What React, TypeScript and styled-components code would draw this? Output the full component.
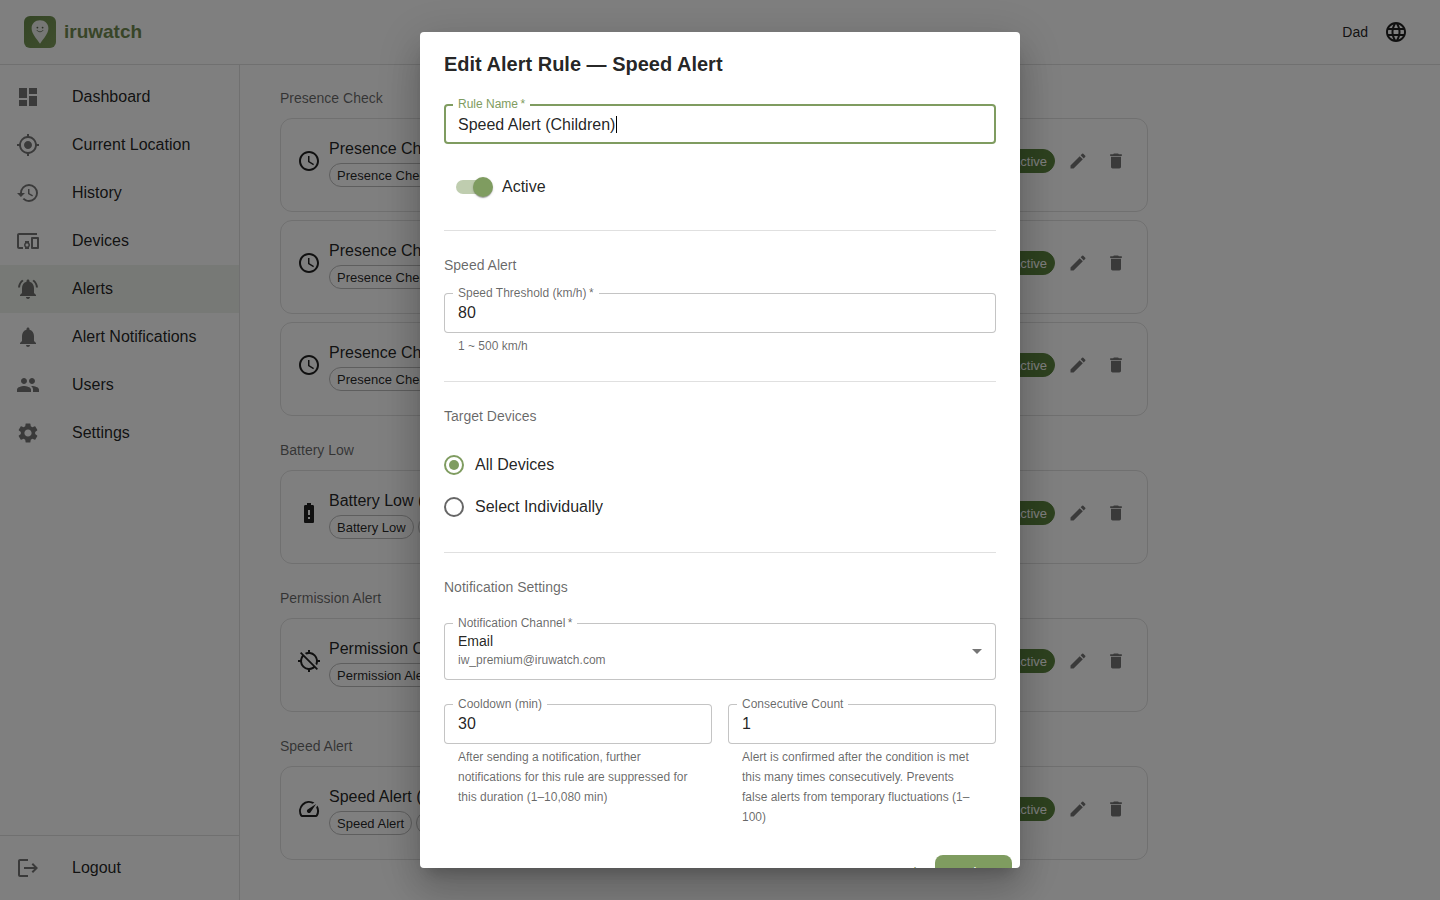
import React, { useEffect, useId, useRef, useState } from "react";
import styled, { createGlobalStyle, css } from "styled-components";
import type { IconType } from "react-icons";
import {
  MdAccessTime,
  MdArrowDropDown,
  MdBatteryAlert,
  MdDashboard,
  MdDelete,
  MdDevicesOther,
  MdEdit,
  MdHistory,
  MdLanguage,
  MdLocationDisabled,
  MdLogout,
  MdMyLocation,
  MdNotifications,
  MdNotificationsActive,
  MdPeople,
  MdSettings,
  MdSpeed,
} from "react-icons/md";

const color = {
  primary: "#7f9c60",
  brand: "#708a50",
  track: "#bfcdaf",
  active: "#5b843e",
  text: "rgba(0, 0, 0, 0.87)",
  muted: "rgba(0, 0, 0, 0.6)",
  icon: "rgba(0, 0, 0, 0.54)",
  divider: "rgba(0, 0, 0, 0.12)",
  outline: "#c4c4c4",
  selected: "rgba(120, 145, 95, 0.12)",
};

const fontFamily = '"Liberation Sans", Arial, sans-serif';

const GlobalStyle = createGlobalStyle`
  *, *::before, *::after { box-sizing: border-box; }
  body {
    margin: 0;
    background: #fff;
    color: ${color.text};
    font-family: ${fontFamily};
    font-size: 16px;
    line-height: 24px;
  }
  button, input, select { font: inherit; color: inherit; }
  button { cursor: pointer; }
`;

/* ---------- Page frame ---------- */

const Shell = styled.div`
  display: flex;
  flex-direction: column;
  height: 100vh;
`;

const Header = styled.header`
  display: flex;
  align-items: center;
  justify-content: space-between;
  height: 65px;
  flex-shrink: 0;
  padding: 0 24px;
  border-bottom: 1px solid ${color.divider};
`;

const Brand = styled.a`
  display: flex;
  align-items: center;
  gap: 8px;
  color: ${color.brand};
  font-size: 19px;
  font-weight: 700;
  text-decoration: none;
`;

const Account = styled.div`
  display: flex;
  align-items: center;
  gap: 8px;
  font-size: 14px;
`;

const IconButton = styled.button<{ $size: number; $strong?: boolean }>`
  display: flex;
  align-items: center;
  justify-content: center;
  width: ${(p) => p.$size}px;
  height: ${(p) => p.$size}px;
  padding: 0;
  border: 0;
  border-radius: 50%;
  background: none;
  color: ${(p) => (p.$strong ? color.text : color.icon)};
`;

const Body = styled.div`
  display: flex;
  flex: 1;
  min-height: 0;
`;

const Sidebar = styled.aside`
  display: flex;
  flex-direction: column;
  justify-content: space-between;
  width: 240px;
  flex-shrink: 0;
  border-right: 1px solid ${color.divider};
`;

const NavList = styled.nav`
  padding: 8px 0;
`;

const SidebarFooter = styled.div`
  padding: 8px 0;
  border-top: 1px solid ${color.divider};
`;

const navEntry = css`
  display: flex;
  align-items: center;
  gap: 32px;
  width: 100%;
  height: 48px;
  padding: 0 16px;
  color: ${color.text};
  svg {
    color: ${color.icon};
  }
`;

const NavLink = styled.a<{ $selected?: boolean }>`
  ${navEntry}
  text-decoration: none;
  background: ${(p) => (p.$selected ? color.selected : "transparent")};
`;

const NavButton = styled.button`
  ${navEntry}
  border: 0;
  background: none;
`;

/* ---------- Rule list ---------- */

const Main = styled.main`
  flex: 1;
  min-width: 0;
  overflow-y: auto;
  padding: 23px 40px;
`;

const Groups = styled.div`
  display: flex;
  flex-direction: column;
  gap: 24px;
  max-width: 868px;
`;

const Group = styled.section`
  display: flex;
  flex-direction: column;
  gap: 8px;
`;

const Subheading = styled.h3`
  margin: 0;
  padding-bottom: 2px;
  color: ${color.muted};
  font-size: 14px;
  font-weight: 400;
  line-height: 20px;
`;

const Card = styled.article`
  display: flex;
  align-items: center;
  gap: 8px;
  padding: 16px 16px 24px;
  border: 1px solid ${color.divider};
  border-radius: 12px;
`;

const CardBody = styled.div`
  flex: 1;
  min-width: 0;
`;

const CardTitle = styled.div`
  line-height: 28px;
`;

const Chips = styled.div`
  display: flex;
  gap: 4px;
`;

const Chip = styled.span<{ $filled?: boolean }>`
  display: inline-flex;
  align-items: center;
  height: 24px;
  padding: 2px 7px 0;
  border: 1px solid ${(p) => (p.$filled ? color.active : "#bdbdbd")};
  border-radius: 12px;
  background: ${(p) => (p.$filled ? color.active : "transparent")};
  color: ${(p) => (p.$filled ? "#fff" : color.text)};
  font-size: 13px;
  line-height: 20px;
  white-space: nowrap;
`;

/* ---------- Dialog ---------- */

const Backdrop = styled.div`
  position: fixed;
  inset: 0;
  display: flex;
  align-items: center;
  justify-content: center;
  padding: 32px;
  background: rgba(0, 0, 0, 0.5);
`;

const Paper = styled.form`
  width: 100%;
  max-width: 600px;
  max-height: 100%;
  overflow-y: auto;
  scrollbar-width: none;
  border-radius: 4px;
  background: #fff;
  box-shadow:
    0 11px 15px -7px rgba(0, 0, 0, 0.2),
    0 24px 38px 3px rgba(0, 0, 0, 0.14),
    0 9px 46px 8px rgba(0, 0, 0, 0.12);
`;

const DialogTitle = styled.h2`
  margin: 0;
  padding: 16px 24px;
  font-size: 20px;
  font-weight: 700;
  line-height: 32px;
`;

const DialogContent = styled.div`
  display: flex;
  flex-direction: column;
  gap: 24px;
  padding: 8px 24px 19px;
`;

const Divider = styled.hr`
  width: 100%;
  height: 1px;
  margin: 0;
  border: 0;
  background: ${color.divider};
`;

const FormSection = styled.section`
  display: flex;
  flex-direction: column;
  gap: 16px;
`;

const FieldRow = styled.div`
  display: grid;
  grid-template-columns: 1fr 1fr;
  gap: 16px;
`;

const FieldBox = styled.div`
  position: relative;
  border-radius: 4px;
  box-shadow: inset 0 0 0 1px ${color.outline};
  &:focus-within {
    box-shadow: inset 0 0 0 2px ${color.primary};
  }
  &:focus-within > label {
    color: ${color.primary};
  }
`;

const FloatingLabel = styled.label`
  position: absolute;
  top: -9px;
  left: 9px;
  padding: 0 5px;
  background: #fff;
  color: ${color.muted};
  font-size: 12px;
  line-height: 18px;
  pointer-events: none;
`;

const TextInput = styled.input`
  display: block;
  width: 100%;
  height: 40px;
  padding: 0 14px;
  border: 0;
  outline: 0;
  background: none;
  appearance: textfield;
  &[type="text"] {
    padding-top: 2px;
    caret-color: transparent;
  }
  &::-webkit-inner-spin-button {
    display: none;
  }
`;

const Caret = styled.span`
  position: absolute;
  top: 12px;
  width: 1px;
  height: 17px;
  background: #000;
`;

const HelperText = styled.p`
  margin: 3px 14px 0;
  padding-bottom: 1px;
  color: ${color.muted};
  font-size: 12px;
  line-height: 20px;
`;

const SelectValue = styled.div`
  display: flex;
  align-items: center;
  justify-content: space-between;
  padding: 8px 7px 9px 14px;
  svg {
    color: ${color.icon};
  }
`;

const SelectText = styled.div`
  display: flex;
  flex-direction: column;
  padding-bottom: 2px;
  font-size: 14px;
  line-height: 20px;
`;

const SelectDetail = styled.span`
  color: ${color.muted};
  font-size: 12px;
  line-height: 18px;
`;

const NativeSelect = styled.select`
  position: absolute;
  inset: 0;
  width: 100%;
  opacity: 0;
`;

const SwitchLabel = styled.label`
  display: flex;
  align-items: center;
`;

const SwitchInput = styled.input`
  position: relative;
  appearance: none;
  width: 34px;
  height: 14px;
  margin: 12px;
  border-radius: 7px;
  background: #9e9e9e;
  &::before {
    content: "";
    position: absolute;
    top: -3px;
    left: -3px;
    width: 20px;
    height: 20px;
    border-radius: 50%;
    background: #fff;
    box-shadow:
      0 2px 1px -1px rgba(0, 0, 0, 0.2),
      0 1px 1px rgba(0, 0, 0, 0.14),
      0 1px 3px rgba(0, 0, 0, 0.12);
  }
  &:checked {
    background: ${color.track};
  }
  &:checked::before {
    left: 17px;
    background: ${color.primary};
  }
`;

const RadioLabel = styled.label`
  display: flex;
  align-items: center;
  gap: 11px;
  height: 42px;
`;

const RadioInput = styled.input`
  display: grid;
  place-items: center;
  appearance: none;
  width: 20px;
  height: 20px;
  margin: 0;
  border: 2px solid ${color.muted};
  border-radius: 50%;
  &:checked {
    border-color: ${color.primary};
  }
  &:checked::before {
    content: "";
    width: 10px;
    height: 10px;
    border-radius: 50%;
    background: ${color.primary};
  }
`;

const DialogActions = styled.div`
  display: flex;
  justify-content: flex-end;
  gap: 8px;
  padding: 8px;
`;

const ActionButton = styled.button<{ $contained?: boolean }>`
  min-width: 64px;
  padding: ${(p) => (p.$contained ? "6px 16px" : "6px 8px")};
  border: 0;
  border-radius: 8px;
  background: ${(p) => (p.$contained ? color.primary : "none")};
  color: ${(p) => (p.$contained ? "#fff" : color.primary)};
  font-size: 14px;
  line-height: 24px;
`;

/* ---------- Pieces ---------- */

function Logo() {
  return (
    <svg width="32" height="32" viewBox="0 0 32 32" aria-hidden="true">
      <defs>
        <linearGradient id="logo-bg" x1="0" y1="0" x2="1" y2="1">
          <stop offset="0" stopColor="#688a4a" />
          <stop offset="1" stopColor="#7f9c5c" />
        </linearGradient>
      </defs>
      <rect width="32" height="32" rx="6" fill="url(#logo-bg)" />
      <path
        d="M16 4.2c-4.8 0-8.400 3.500-8.400 8 0 5.300 4.800 10.200 8.400 15.500 3.600-5.300 8.400-10.200 8.400-15.500 0-4.500-3.600-8-8.400-8z"
        fill="#eceeea"
      />
      <circle cx="13.400" cy="11.600" r="0.900" fill="#55604a" />
      <circle cx="18.600" cy="11.600" r="0.900" fill="#55604a" />
      <path d="M13 14.400c1.400 1.900 4.600 1.900 6 0" fill="none" stroke="#55604a" strokeWidth="0.800" strokeLinecap="round" />
    </svg>
  );
}

function textWidth(text: string) {
  const context = document.createElement("canvas").getContext("2d");
  if (!context) return 0;
  context.font = `16px ${fontFamily}`;
  return Math.round(context.measureText(text).width);
}

type FieldProps = {
  label: string;
  required?: boolean;
  value: string;
  type?: string;
  helper?: string;
  focusOnOpen?: boolean;
};

function Field({ label, required, value, type = "text", helper, focusOnOpen }: FieldProps) {
  const id = useId();
  const ref = useRef<HTMLInputElement>(null);
  const [current, setCurrent] = useState(value);
  const [caret, setCaret] = useState<number | null>(null);

  const updateCaret = () => {
    const input = ref.current;
    if (!input || input.type !== "text") return;
    setCaret(textWidth(input.value.slice(0, input.selectionEnd ?? input.value.length)));
  };

  useEffect(() => {
    if (focusOnOpen && ref.current) {
      ref.current.focus();
      ref.current.setSelectionRange(value.length, value.length);
      updateCaret();
    }
  }, [focusOnOpen, value]);

  return (
    <div>
      <FieldBox>
        <TextInput
          id={id}
          ref={ref}
          type={type}
          required={required}
          value={current}
          aria-describedby={helper ? `${id}-help` : undefined}
          onChange={(e) => setCurrent(e.target.value)}
          onSelect={updateCaret}
          onBlur={() => setCaret(null)}
        />
        {caret !== null && <Caret style={{ left: 14 + caret }} />}
        <FloatingLabel htmlFor={id}>
          {label}
          {required && "\u2009*"}
        </FloatingLabel>
      </FieldBox>
      {helper && <HelperText id={`${id}-help`}>{helper}</HelperText>}
    </div>
  );
}

function ChannelSelect() {
  return (
    <FieldBox>
      <SelectValue aria-hidden="true">
        <SelectText>
          <span>Email</span>
          <SelectDetail>iw_premium@iruwatch.com</SelectDetail>
        </SelectText>
        <MdArrowDropDown size={24} />
      </SelectValue>
      <NativeSelect id="channel" required defaultValue="email">
        <option value="email">Email</option>
      </NativeSelect>
      <FloatingLabel htmlFor="channel">Notification Channel{"\u2009*"}</FloatingLabel>
    </FieldBox>
  );
}

type Rule = { title: string; target: string };
type RuleGroup = { name: string; icon: IconType; rules: Rule[] };

const nav: { label: string; icon: IconType }[] = [
  { label: "Dashboard", icon: MdDashboard },
  { label: "Current Location", icon: MdMyLocation },
  { label: "History", icon: MdHistory },
  { label: "Devices", icon: MdDevicesOther },
  { label: "Alerts", icon: MdNotificationsActive },
  { label: "Alert Notifications", icon: MdNotifications },
  { label: "Users", icon: MdPeople },
  { label: "Settings", icon: MdSettings },
];

const groups: RuleGroup[] = [
  {
    name: "Presence Check",
    icon: MdAccessTime,
    rules: [
      { title: "Presence Check", target: "All Devices" },
      { title: "Presence Check", target: "All Devices" },
      { title: "Presence Check", target: "All Devices" },
    ],
  },
  { name: "Battery Low", icon: MdBatteryAlert, rules: [{ title: "Battery Low (Children)", target: "All Devices" }] },
  { name: "Permission Alert", icon: MdLocationDisabled, rules: [{ title: "Permission Check", target: "All Devices" }] },
  { name: "Speed Alert", icon: MdSpeed, rules: [{ title: "Speed Alert (Children)", target: "All Devices" }] },
];

function RuleCard({ rule, group }: { rule: Rule; group: RuleGroup }) {
  const Icon = group.icon;
  return (
    <Card>
      <Icon size={24} />
      <CardBody>
        <CardTitle>{rule.title}</CardTitle>
        <Chips>
          <Chip>{group.name}</Chip>
          <Chip>{rule.target}</Chip>
        </Chips>
      </CardBody>
      <Chip $filled>Active</Chip>
      <IconButton $size={30} aria-label="Edit">
        <MdEdit size={20} />
      </IconButton>
      <IconButton $size={30} aria-label="Delete">
        <MdDelete size={20} />
      </IconButton>
    </Card>
  );
}

function EditRuleDialog() {
  return (
    <Backdrop>
      <Paper role="dialog" aria-modal="true" aria-labelledby="dialog-title" onSubmit={(e) => e.preventDefault()}>
        <DialogTitle id="dialog-title">Edit Alert Rule — Speed Alert</DialogTitle>
        <DialogContent>
          <Field label="Rule Name" required value="Speed Alert (Children)" focusOnOpen />
          <SwitchLabel>
            <SwitchInput type="checkbox" role="switch" defaultChecked />
            Active
          </SwitchLabel>
          <Divider />
          <FormSection>
            <Subheading>Speed Alert</Subheading>
            <Field label="Speed Threshold (km/h)" required value="80" type="number" helper="1 ~ 500 km/h" />
          </FormSection>
          <Divider />
          <FormSection>
            <Subheading>Target Devices</Subheading>
            <div role="radiogroup" aria-label="Target Devices">
              <RadioLabel>
                <RadioInput type="radio" name="target" value="all" defaultChecked />
                All Devices
              </RadioLabel>
              <RadioLabel>
                <RadioInput type="radio" name="target" value="individual" />
                Select Individually
              </RadioLabel>
            </div>
          </FormSection>
          <Divider />
          <Subheading>Notification Settings</Subheading>
          <ChannelSelect />
          <FieldRow>
            <Field
              label="Cooldown (min)"
              value="30"
              type="number"
              helper="After sending a notification, further notifications for this rule are suppressed for this duration (1–10,080 min)"
            />
            <Field
              label="Consecutive Count"
              value="1"
              type="number"
              helper="Alert is confirmed after the condition is met this many times consecutively. Prevents false alerts from temporary fluctuations (1–100)"
            />
          </FieldRow>
        </DialogContent>
        <DialogActions>
          <ActionButton type="button">Cancel</ActionButton>
          <ActionButton type="submit" $contained>
            Update
          </ActionButton>
        </DialogActions>
      </Paper>
    </Backdrop>
  );
}

export default function App() {
  return (
    <>
      <GlobalStyle />
      <Shell>
        <Header>
          <Brand href="#">
            <Logo />
            iruwatch
          </Brand>
          <Account>
            Dad
            <IconButton $size={40} $strong aria-label="Language">
              <MdLanguage size={24} />
            </IconButton>
          </Account>
        </Header>
        <Body>
          <Sidebar>
            <NavList>
              {nav.map(({ label, icon: Icon }) => (
                <NavLink key={label} href="#" $selected={label === "Alerts"}>
                  <Icon size={24} />
                  {label}
                </NavLink>
              ))}
            </NavList>
            <SidebarFooter>
              <NavButton>
                <MdLogout size={24} />
                Logout
              </NavButton>
            </SidebarFooter>
          </Sidebar>
          <Main>
            <Groups>
              {groups.map((group) => (
                <Group key={group.name}>
                  <Subheading>{group.name}</Subheading>
                  {group.rules.map((rule, i) => (
                    <RuleCard key={i} rule={rule} group={group} />
                  ))}
                </Group>
              ))}
            </Groups>
          </Main>
        </Body>
      </Shell>
      <EditRuleDialog />
    </>
  );
}
